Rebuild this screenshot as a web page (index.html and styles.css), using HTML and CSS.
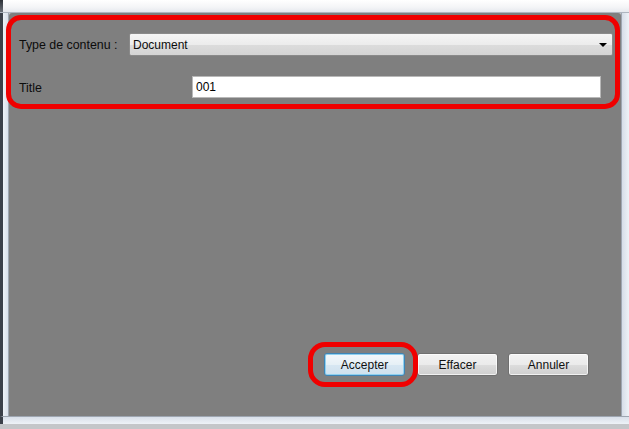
FILE: index.html
```html
<!DOCTYPE html>
<html lang="fr">
<head>
<meta charset="utf-8">
<title>Type de contenu</title>
<link rel="stylesheet" href="styles.css">
</head>
<body>
<div class="window">
  <div class="titlebar"><div class="tb-edge"></div><div class="tb-fill"></div></div>
  <div class="middle">
    <div class="lframe"></div>
    <div class="panel">
      <div class="form">
        <div class="row row-type">
          <span class="label label-type">Type de contenu :</span>
          <div class="combo">
            <span class="combo-text">Document</span>
            <span class="combo-arrow"></span>
          </div>
        </div>
        <div class="row row-title">
          <span class="label label-title">Title</span>
          <div class="textbox">001</div>
        </div>
      </div>
      <div class="actions">
        <button class="btn btn-default">Accepter</button>
        <button class="btn btn-clear">Effacer</button>
        <button class="btn btn-cancel">Annuler</button>
      </div>
    </div>
    <div class="rframe"></div>
  </div>
  <div class="bframe"></div>
  <div class="shadow"></div>
</div>
<div class="mark mark-form"></div>
<div class="mark mark-btn"></div>
</body>
</html>
```
FILE: styles.css
```css
html, body {
  margin: 0;
  padding: 0;
}
body {
  width: 629px;
  height: 429px;
  overflow: hidden;
  position: relative;
  font-family: "Liberation Sans", Arial, sans-serif;
  font-size: 12px;
  color: #0c0c0c;
  background: #c4c6c9;
}
.window {
  width: 629px;
  height: 429px;
  display: flex;
  flex-direction: column;
}
.titlebar {
  height: 13px;
  display: flex;
  border-bottom: 1px solid #aeb5bf;
  box-sizing: border-box;
}
.tb-edge {
  width: 3px;
  background: linear-gradient(#2d3138, #6b7078);
}
.tb-fill {
  flex: 1;
  background: linear-gradient(#ffffff, #f4f5f7 60%, #e6e9ee);
}
.middle {
  display: flex;
  height: 403px;
}
.lframe {
  width: 9px;
  box-sizing: border-box;
  border-left: 3px solid #3b4049;
  border-right: 1px solid #9ea6b1;
  background: linear-gradient(90deg, #eef2f7, #d9e0ea);
}
.rframe {
  width: 8px;
  box-sizing: border-box;
  border-left: 1px solid #9ea6b1;
  background: linear-gradient(90deg, #d6dde8, #eef2f7);
}
.panel {
  flex: 1;
  background: #7f7f7f;
  display: flex;
  flex-direction: column;
  box-sizing: border-box;
  padding: 20px 0 40px 0;
  border-top-left-radius: 3px;
  border-top-right-radius: 3px;
}
.form {
  display: flex;
  flex-direction: column;
  gap: 20px;
}
.row {
  display: flex;
  align-items: center;
  padding-left: 10px;
}
.label {
  flex: none;
  font-size: 12.4px;
}
.label-type { width: 110px; }
.label-title { width: 173px; padding-top: 2px; }
.combo {
  width: 484px;
  height: 23px;
  box-sizing: border-box;
  border: 1px solid #8a8a8a;
  border-radius: 2px;
  background: linear-gradient(#f5f5f5, #ececec 50%, #dcdcdc 51%, #d4d4d4);
  display: flex;
  align-items: center;
  justify-content: space-between;
  padding: 0 4px 0 3px;
}
.combo-arrow {
  width: 0;
  height: 0;
  border-left: 4px solid transparent;
  border-right: 4px solid transparent;
  border-top: 4px solid #000;
  margin-right: 1px;
}
.textbox {
  width: 409px;
  height: 22px;
  box-sizing: border-box;
  background: #fff;
  border: 1px solid #b8b8b8;
  padding: 0 3px;
  display: flex;
  align-items: center;
  color: #000;
}
.actions {
  margin-top: auto;
  display: flex;
  justify-content: flex-end;
  padding-right: 32px;
  gap: 10px;
}
.btn {
  width: 81px;
  height: 23px;
  font-family: "Liberation Sans", Arial, sans-serif;
  font-size: 12px;
  color: #111;
  border: 1px solid #707070;
  border-radius: 3px;
  background: linear-gradient(#f2f2f2, #ebebeb 50%, #dddddd 51%, #cfcfcf);
  padding: 0;
  box-shadow: inset 0 0 0 1px rgba(255,255,255,0.7);
}
.btn-default {
  border-color: #3d86b8;
  background: linear-gradient(#f3f8fb, #e6f0f6 50%, #d7e7f2 51%, #cfe1ee);
  box-shadow: inset 0 0 0 1px #8fd0ef;
  margin-right: 2px;
}
.bframe {
  height: 8px;
  box-sizing: border-box;
  border-top: 1px solid #9ea6b1;
  border-left: 3px solid #3b4049;
  background: linear-gradient(#d9e0ea, #eef2f7);
}
.shadow {
  height: 5px;
  background: #c4c6c9;
}
.mark {
  position: absolute;
  border: 5px solid #f00000;
  box-sizing: border-box;
  pointer-events: none;
}
.mark-form {
  left: 6px;
  top: 15px;
  width: 614px;
  height: 94px;
  border-radius: 15px;
}
.mark-btn {
  left: 308px;
  top: 342px;
  width: 110px;
  height: 45px;
  border-radius: 17px;
}
```
